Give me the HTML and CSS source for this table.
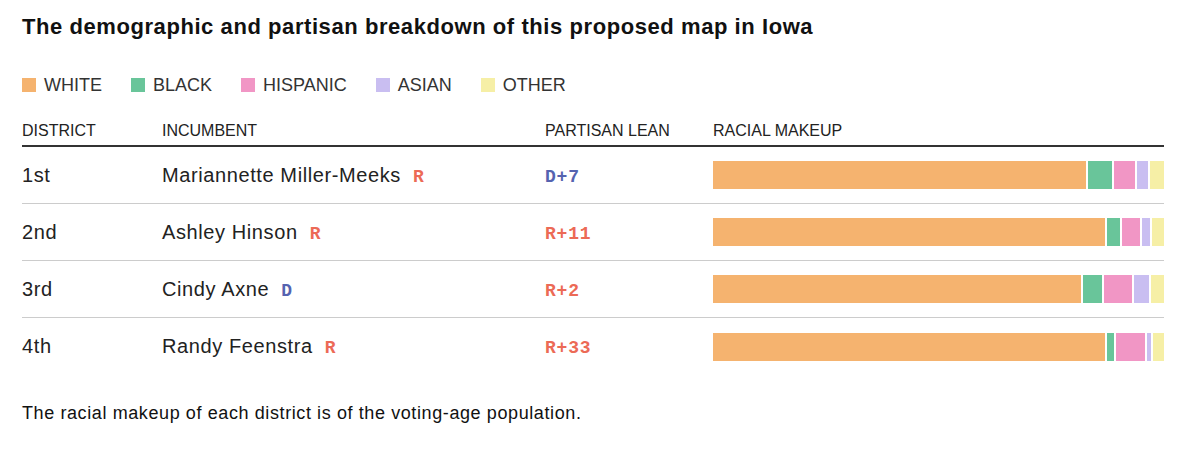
FILE: index.html
```html
<!DOCTYPE html>
<html lang="en">
<head>
<meta charset="utf-8">
<title>Iowa proposed map</title>
<link rel="stylesheet" href="styles.css">
</head>
<body>
<div class="chart">
  <h1 class="title">The demographic and partisan breakdown of this proposed map in Iowa</h1>
  <ul class="legend">
    <li class="legend-item"><span class="swatch white"></span>WHITE</li>
    <li class="legend-item"><span class="swatch black"></span>BLACK</li>
    <li class="legend-item"><span class="swatch hispanic"></span>HISPANIC</li>
    <li class="legend-item"><span class="swatch asian"></span>ASIAN</li>
    <li class="legend-item"><span class="swatch other"></span>OTHER</li>
  </ul>
  <div class="table">
    <div class="row head">
      <div class="cell">DISTRICT</div>
      <div class="cell">INCUMBENT</div>
      <div class="cell">PARTISAN LEAN</div>
      <div class="cell">RACIAL MAKEUP</div>
    </div>
    <div class="row">
      <div class="cell">1st</div>
      <div class="cell">Mariannette Miller-Meeks <span class="party rep">R</span></div>
      <div class="cell"><span class="lean dem">D+7</span></div>
      <div class="cell"><div class="bar">
        <span class="seg white" style="width:82.67%"></span><span class="seg black" style="width:5.78%"></span><span class="seg hispanic" style="width:5.11%"></span><span class="seg asian" style="width:2.89%"></span><span class="seg other" style="width:3.56%"></span>
      </div></div>
    </div>
    <div class="row">
      <div class="cell">2nd</div>
      <div class="cell">Ashley Hinson <span class="party rep">R</span></div>
      <div class="cell"><span class="lean rep">R+11</span></div>
      <div class="cell"><div class="bar">
        <span class="seg white" style="width:86.89%"></span><span class="seg black" style="width:3.33%"></span><span class="seg hispanic" style="width:4.44%"></span><span class="seg asian" style="width:2.22%"></span><span class="seg other" style="width:3.11%"></span>
      </div></div>
    </div>
    <div class="row">
      <div class="cell">3rd</div>
      <div class="cell">Cindy Axne <span class="party dem">D</span></div>
      <div class="cell"><span class="lean rep">R+2</span></div>
      <div class="cell"><div class="bar">
        <span class="seg white" style="width:81.56%"></span><span class="seg black" style="width:4.67%"></span><span class="seg hispanic" style="width:6.67%"></span><span class="seg asian" style="width:3.78%"></span><span class="seg other" style="width:3.33%"></span>
      </div></div>
    </div>
    <div class="row last">
      <div class="cell">4th</div>
      <div class="cell">Randy Feenstra <span class="party rep">R</span></div>
      <div class="cell"><span class="lean rep">R+33</span></div>
      <div class="cell"><div class="bar">
        <span class="seg white" style="width:86.89%"></span><span class="seg black" style="width:2%"></span><span class="seg hispanic" style="width:6.89%"></span><span class="seg asian" style="width:1.33%"></span><span class="seg other" style="width:2.89%"></span>
      </div></div>
    </div>
  </div>
  <p class="note">The racial makeup of each district is of the voting-age population.</p>
</div>
</body>
</html>
```
FILE: styles.css
```css
* { box-sizing: border-box; }
html, body { margin: 0; padding: 0; background: #fff; }
body {
  font-family: "Liberation Sans", Arial, sans-serif;
  color: #222;
}
.chart {
  width: 1142px;
  margin-left: 22px;
  padding-top: 13px;
}
.title {
  margin: 0;
  font-size: 22px;
  line-height: 28px;
  font-weight: 700;
  color: #111;
  letter-spacing: 0.57px;
}
.legend {
  list-style: none;
  margin: 0;
  padding: 0;
  margin-top: 33px;
  display: flex;
  gap: 29px;
  height: 22px;
  align-items: center;
}
.legend-item {
  display: flex;
  align-items: center;
  font-size: 18px;
  color: #333;
}
.swatch {
  display: inline-block;
  width: 14px;
  height: 14px;
  margin-right: 8px;
}
.white { background: #f5b36f; }
.black { background: #69c59a; }
.hispanic { background: #f196c5; }
.asian { background: #c9bef1; }
.other { background: #f6efa6; }

.table { margin-top: 26px; }
.row {
  display: grid;
  grid-template-columns: 140px 383px 168px 1fr;
  align-items: center;
  height: 57px;
  border-bottom: 1px solid #ccc;
  font-size: 20px;
  letter-spacing: 0.6px;
  color: #222;
}
.row.last { border-bottom: none; }
.row.head {
  height: 25px;
  align-items: start;
  border-bottom: 2px solid #333;
  font-size: 16px;
  letter-spacing: 0;
  color: #222;
}
.party, .lean {
  font-family: "Liberation Mono", "DejaVu Sans Mono", monospace;
  font-weight: 700;
  font-size: 18px;
}
.party { margin-left: 6px; letter-spacing: 0; }
.lean { letter-spacing: 0.8px; }
.rep { color: #ec6a56; }
.dem { color: #5563b0; }
.bar {
  display: flex;
  height: 28px;
}
.seg { display: block; height: 100%; }
.seg + .seg { border-left: 2px solid #fff; }
.note {
  margin: 0;
  margin-top: 28px;
  font-size: 18px;
  letter-spacing: 0.6px;
  color: #111;
}
```
